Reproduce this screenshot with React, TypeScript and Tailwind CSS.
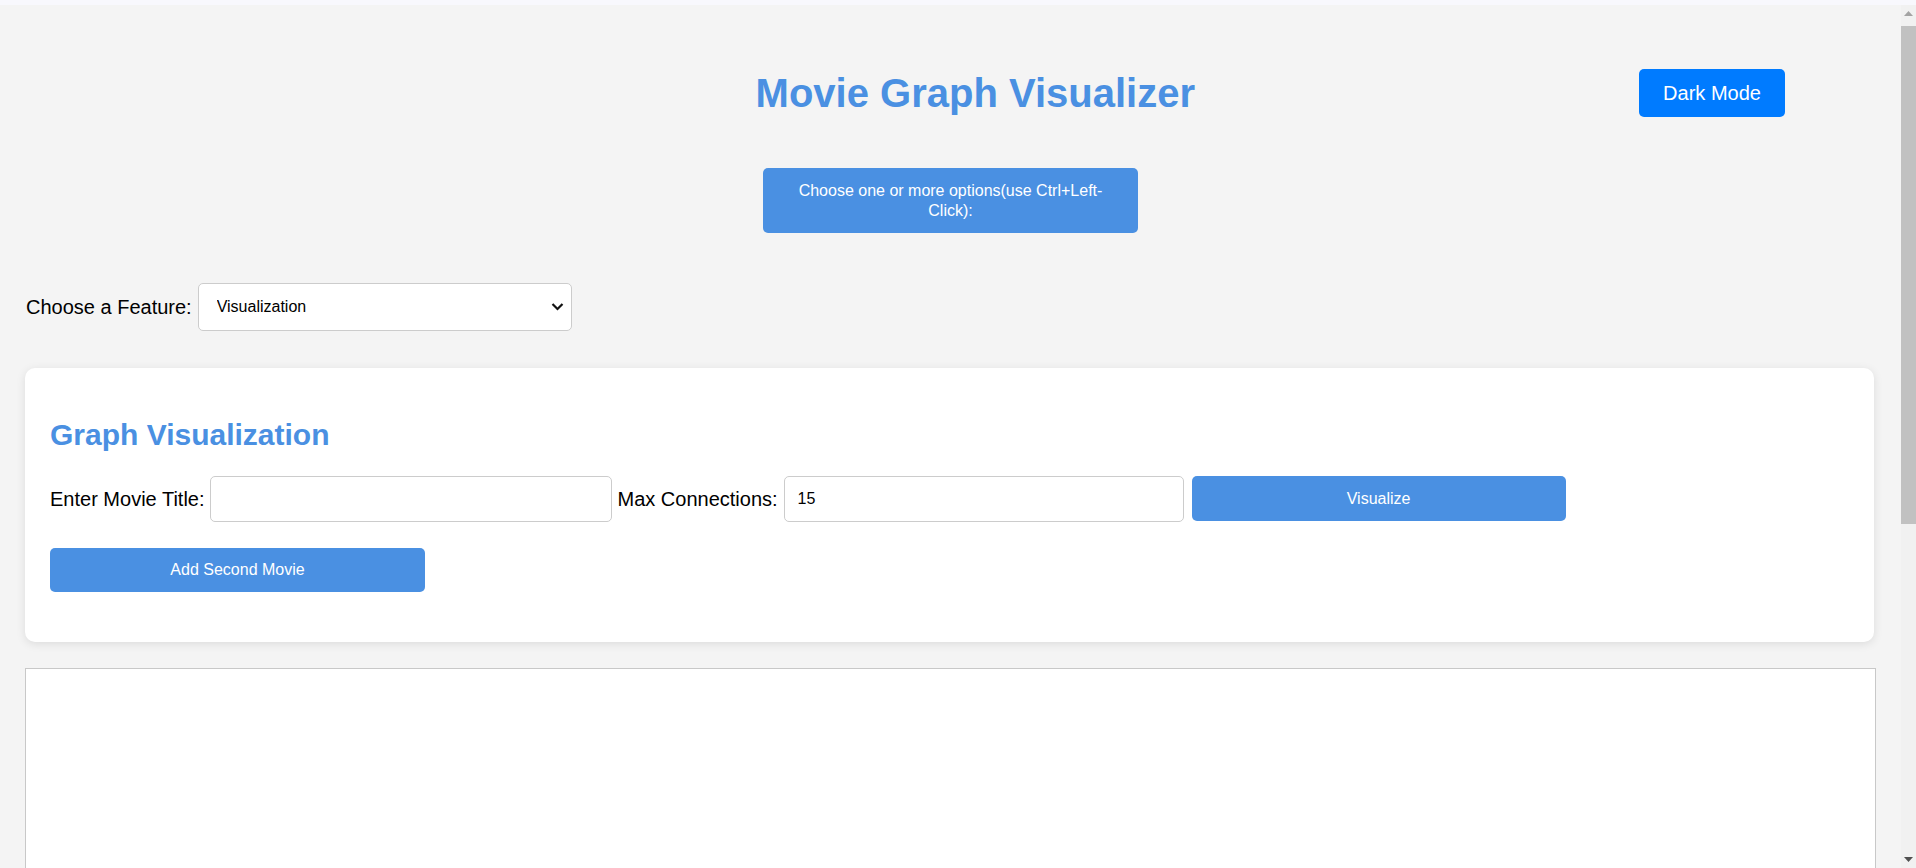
import { useState } from "react";

const font = { fontFamily: '"Liberation Sans", Arial, sans-serif' };

function FeatureSelect() {
  const [value, setValue] = useState("visualization");
  return (
    <div className="relative ml-[6px] w-[374px] h-[48px]">
      <select
        value={value}
        onChange={(e) => setValue(e.target.value)}
        className="appearance-none w-full h-full rounded-[5px] border border-[#cccccc] bg-white pl-[18px] pr-[30px] text-[16px] text-black outline-none"
      >
        <option value="visualization">Visualization</option>
        <option value="path">Shortest Path</option>
        <option value="recs">Recommendations</option>
      </select>
      <svg
        className="pointer-events-none absolute right-[8px] top-[19px]"
        width="13"
        height="9"
        viewBox="0 0 13 9"
        fill="none"
      >
        <path d="M1.5 2 L6.5 7 L11.5 2" stroke="#111" strokeWidth="2.2" />
      </svg>
    </div>
  );
}

// the page's vertical scrollbar, as it shows in the screenshot
function Scrollbar() {
  return (
    <div className="flex w-[15px] shrink-0 flex-col bg-[#f1f1f1]">
      <div className="flex h-[17px] items-center justify-center">
        <svg width="9" height="5" viewBox="0 0 9 5">
          <path d="M4.5 0 L9 5 L0 5 Z" fill="#a3a3a3" />
        </svg>
      </div>
      <div className="mt-[4px] h-[498px] bg-[#c1c1c1]" />
      <div className="mt-auto flex h-[17px] items-center justify-center">
        <svg width="9" height="5" viewBox="0 0 9 5">
          <path d="M0 0 L9 0 L4.5 5 Z" fill="#505050" />
        </svg>
      </div>
    </div>
  );
}

export default function App() {
  const [title, setTitle] = useState("");
  const [maxConn, setMaxConn] = useState("15");

  return (
    <div className="h-screen flex flex-col" style={font}>
      <div className="h-[5px] shrink-0 bg-[#f8f8fd]" />
      <div className="flex min-h-0 flex-1">
        <main className="flex-1 overflow-hidden bg-[#f4f4f4] text-black">
          <header className="flex items-center justify-end gap-[444px] pt-[64px] pr-[116px]">
            <h1 className="text-[40px] font-bold leading-[46px] text-[#4a90e2]">
              Movie Graph Visualizer
            </h1>
            <button
              type="button"
              className="h-[48px] w-[146px] rounded-[5px] bg-[#007bff] text-[20px] text-white"
            >
              Dark Mode
            </button>
          </header>

          <div className="mt-[51px] flex justify-center">
            <div className="flex h-[65px] w-[375px] items-center justify-center rounded-[5px] bg-[#4a90e2] px-[20px] text-center text-[16px] leading-[20px] text-white">
              Choose one or more options(use Ctrl+Left-Click):
            </div>
          </div>

          <div className="mt-[50px] flex items-center pl-[26px]">
            <label className="text-[20px]">Choose a Feature:</label>
            <FeatureSelect />
          </div>

          <section className="mt-[37px] ml-[25px] mr-[27px] rounded-[10px] bg-white px-[25px] pt-[25px] pb-[50px] shadow-[0_2px_10px_rgba(0,0,0,0.1)]">
            <h2 className="mt-[25px] mb-[23px] text-[30px] font-bold leading-[34.5px] text-[#4a90e2]">
              Graph Visualization
            </h2>
            <div className="flex items-center">
              <label className="mr-[5px] text-[20px]">Enter Movie Title:</label>
              <input
                value={title}
                onChange={(e) => setTitle(e.target.value)}
                className="h-[46px] w-[402px] rounded-[5px] border border-[#cccccc] px-[12px] text-[16px] outline-none"
              />
              <label className="ml-[6px] mr-[6px] text-[20px]">Max Connections:</label>
              <input
                value={maxConn}
                onChange={(e) => setMaxConn(e.target.value)}
                className="h-[46px] w-[400px] rounded-[5px] border border-[#cccccc] px-[13px] text-[16px] outline-none"
              />
              <button
                type="button"
                className="ml-[8px] h-[45px] w-[374px] rounded-[5px] bg-[#4a90e2] text-[16px] text-white"
              >
                Visualize
              </button>
            </div>
            <button
              type="button"
              className="mt-[26px] h-[44px] w-[375px] rounded-[5px] bg-[#4a90e2] text-[16px] text-white"
            >
              Add Second Movie
            </button>
          </section>

          <div className="pb-[20px]">
            <div className="mt-[26px] ml-[25px] mr-[25px] h-[745px] border border-[#c8c8c8] bg-white" />
          </div>
        </main>
        <Scrollbar />
      </div>
    </div>
  );
}
